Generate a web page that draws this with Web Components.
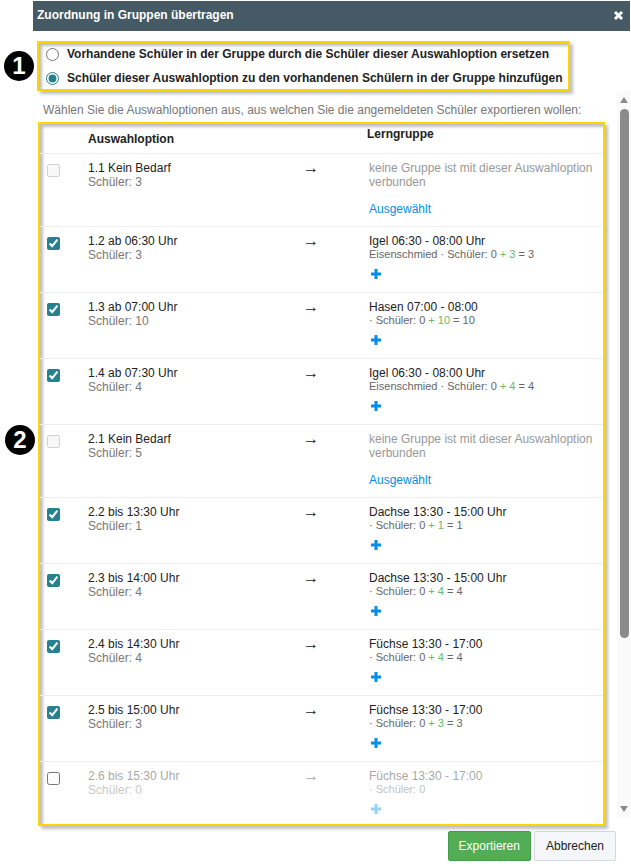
<!DOCTYPE html>
<html lang="de">
<head>
<meta charset="utf-8">
<meta name="viewport" content="width=device-width, initial-scale=1">
<title>Zuordnung in Gruppen übertragen</title>
<style>
	body {
		margin: 0;
		background: #fff;
		color: #222;
		font: 12px/14px "Liberation Sans", Arial, sans-serif;
	}
</style>
</head>
<body>
<transfer-dialog heading="Zuordnung in Gruppen übertragen">
	<callout-box slot="mode" number="1">
		<mode-choice></mode-choice>
	</callout-box>
	<scroll-pane>
		<span slot="intro">Wählen Sie die Auswahloptionen aus, aus welchen Sie die angemeldeten Schüler exportieren wollen:</span>
		<callout-box number="2" class="wide">
			<option-table></option-table>
		</callout-box>
	</scroll-pane>
	<action-button slot="actions" variant="primary">Exportieren</action-button>
	<action-button slot="actions">Abbrechen</action-button>
</transfer-dialog>

<script>
class TransferDialog extends HTMLElement {
	constructor() {
		super();
		this.attachShadow({ mode: 'open' });
		this.shadowRoot.innerHTML = `
			<style>
				:host {
					display: block;
					padding: 1px 0 6px 33px;
				}

				header {
					display: flex;
					align-items: center;
					justify-content: space-between;
					height: 30px;
					margin-right: 1px;
					padding: 0 6px 0 4px;
					box-sizing: border-box;
					background: #455a64;
					color: #fff;
				}

				h1 {
					margin: 0;
					padding-bottom: 2px;
					font-size: 12px;
				}

				.close {
					display: flex;
					padding: 0 0 2px;
					border: 0;
					background: none;
					color: inherit;
					cursor: pointer;
				}

				.mode {
					display: flex;
					padding: 10px 4px 0;
				}

				footer {
					display: flex;
					justify-content: flex-end;
					gap: 3px;
					padding: 5px 15px 0 0;
				}
			</style>
			<header>
				<h1></h1>
				<button class="close" type="button" aria-label="Schließen">
					<svg width="11" height="11" viewBox="0 0 11 11"><path d="M2 2l7 7M9 2l-7 7" stroke="currentColor" stroke-width="3"/></svg>
				</button>
			</header>
			<div class="mode"><slot name="mode"></slot></div>
			<slot></slot>
			<footer><slot name="actions"></slot></footer>
		`;
	}

	connectedCallback() {
		this.shadowRoot.querySelector('h1').textContent = this.getAttribute('heading');
	}
}

// Yellow frame with a numbered marker hanging over its left edge
class CalloutBox extends HTMLElement {
	constructor() {
		super();
		this.attachShadow({ mode: 'open' });
		this.shadowRoot.innerHTML = `
			<style>
				:host {
					display: block;
					position: relative;
					border: 2px solid #ffd400;
					box-shadow: 3px 3px 3px #00000040, inset 3px 3px 3px #00000040;
				}

				.marker {
					position: absolute;
					top: 8px;
					left: -35px;
					width: 30px;
					height: 30px;
					border-radius: 50%;
					background: #000;
					color: #fff;
					font: bold 24px/30px "Liberation Sans", Arial, sans-serif;
					text-align: center;
				}

				:host(.wide) .marker {
					top: 43%;
				}
			</style>
			<span class="marker"></span>
			<slot></slot>
		`;
	}

	connectedCallback() {
		this.shadowRoot.querySelector('.marker').textContent = this.getAttribute('number');
	}
}

class ModeChoice extends HTMLElement {
	constructor() {
		super();
		this.attachShadow({ mode: 'open' });
		this.shadowRoot.innerHTML = `
			<style>
				:host {
					display: flex;
					flex-direction: column;
					gap: 2px;
					padding: 0 5px 0 7px;
					font-weight: bold;
				}

				label {
					display: flex;
					align-items: center;
					gap: 8px;
					min-height: 22px;
				}

				input {
					width: 13px;
					height: 13px;
					margin: 0;
					accent-color: #25808f;
				}
			</style>
			<label><input type="radio" name="mode">Vorhandene Schüler in der Gruppe durch die Schüler dieser Auswahloption ersetzen</label>
			<label><input type="radio" name="mode" checked>Schüler dieser Auswahloption zu den vorhandenen Schülern in der Gruppe hinzufügen</label>
		`;
	}
}

class ScrollPane extends HTMLElement {
	constructor() {
		super();
		this.attachShadow({ mode: 'open' });
		this.shadowRoot.innerHTML = `
			<style>
				:host {
					display: flex;
					gap: 12px;
				}

				.content {
					flex: 1;
					min-width: 0;
					padding: 12px 0 0 5px;
				}

				.intro {
					margin: 0 0 5px;
					padding-left: 5px;
					color: #777;
				}

				.bar {
					display: flex;
					flex-direction: column;
					align-items: center;
					width: 14px;
					margin-bottom: 8px;
					padding: 6px 0;
					box-sizing: border-box;
					gap: 6px;
					background: #fafafa;
				}

				.thumb {
					width: 9px;
					height: 74%;
					border-radius: 5px;
					background: #8b8b8b;
				}

				.down {
					margin-top: auto;
				}
			</style>
			<div class="content">
				<p class="intro"><slot name="intro"></slot></p>
				<slot></slot>
			</div>
			<div class="bar" aria-hidden="true">
				<svg width="8" height="6" viewBox="0 0 8 6"><path d="M4 0l4 6H0z" fill="#8b8b8b"/></svg>
				<div class="thumb"></div>
				<svg class="down" width="8" height="6" viewBox="0 0 8 6"><path d="M0 0h8L4 6z" fill="#8b8b8b"/></svg>
			</div>
		`;
	}
}

class OptionTable extends HTMLElement {
	constructor() {
		super();
		this.attachShadow({ mode: 'open' });

		this.options = [
			{ name: '1.1 Kein Bedarf', count: 3 },
			{ name: '1.2 ab 06:30 Uhr', count: 3, group: 'Igel 06:30 - 08:00 Uhr', teacher: 'Eisenschmied' },
			{ name: '1.3 ab 07:00 Uhr', count: 10, group: 'Hasen 07:00 - 08:00' },
			{ name: '1.4 ab 07:30 Uhr', count: 4, group: 'Igel 06:30 - 08:00 Uhr', teacher: 'Eisenschmied' },
			{ name: '2.1 Kein Bedarf', count: 5 },
			{ name: '2.2 bis 13:30 Uhr', count: 1, group: 'Dachse 13:30 - 15:00 Uhr' },
			{ name: '2.3 bis 14:00 Uhr', count: 4, group: 'Dachse 13:30 - 15:00 Uhr' },
			{ name: '2.4 bis 14:30 Uhr', count: 4, group: 'Füchse 13:30 - 17:00' },
			{ name: '2.5 bis 15:00 Uhr', count: 3, group: 'Füchse 13:30 - 17:00' },
			{ name: '2.6 bis 15:30 Uhr', count: 0, group: 'Füchse 13:30 - 17:00' }
		];

		this.render();
	}

	groupCell(option) {
		if (!option.group) {
			return `
				<div class="none">keine Gruppe ist mit dieser Auswahloption verbunden</div>
				<a href="#">Ausgewählt</a>
			`;
		}
		const sum = option.count ? ` <span class="plus">+ ${option.count}</span> = ${option.count}` : '';
		return `
			<div>${option.group}</div>
			<div class="detail">${option.teacher ? option.teacher + ' ' : ''}· Schüler: 0${sum}</div>
			<button type="button" aria-label="Gruppe hinzufügen">
				<svg width="10" height="10" viewBox="0 0 10 10"><path d="M5 0v10M0 5h10" stroke="currentColor" stroke-width="3"/></svg>
			</button>
		`;
	}

	row(option, index) {
		const state = !option.group ? 'disabled' : option.count ? 'checked' : '';
		return `
			<tr class="${option.count ? '' : 'empty'}">
				<td class="check"><input type="checkbox" id="option-${index}" ${state}></td>
				<td><label for="option-${index}">${option.name}<span class="count">Schüler: ${option.count}</span></label></td>
				<td class="arrow"><span>→</span></td>
				<td class="group"><div>${this.groupCell(option)}</div></td>
			</tr>
		`;
	}

	render() {
		this.shadowRoot.innerHTML = `
			<style>
				:host {
					display: block;
				}

				table {
					width: 100%;
					table-layout: fixed;
					border-collapse: collapse;
				}

				.col-check { width: 48px; }
				.col-name { width: 215px; }
				.col-arrow { width: 64px; }

				th, td {
					padding: 7px 0 6px;
					border-bottom: 1px solid #eee;
					text-align: left;
					vertical-align: top;
				}

				th {
					height: 20px;
					padding: 8px 0 1px;
				}

				th.group {
					padding: 3px 0 6px;
				}

				tr:last-child td {
					padding-bottom: 3px;
					border-bottom: 0;
				}

				td.check {
					padding: 10px 0 0 7px;
				}

				td.group {
					padding-left: 2px;
				}

				input {
					display: block;
					width: 13px;
					height: 13px;
					margin: 0;
					accent-color: #25808f;
				}

				label, .count, .arrow span {
					display: block;
				}

				.arrow {
					font-size: 16px;
				}

				.count {
					color: #777;
				}

				.none {
					color: #999;
				}

				.detail {
					color: #666;
					font-size: 11px;
					line-height: 13px;
				}

				.plus {
					color: #66bb6a;
				}

				a {
					display: block;
					margin: 13px 0 4px;
					color: #038ee9;
					text-decoration: none;
				}

				button {
					display: flex;
					align-items: center;
					height: 25px;
					padding: 0 2px;
					border: 0;
					background: none;
					color: #038ee9;
					cursor: pointer;
				}

				.empty label, .empty .arrow span, .empty .group > div {
					opacity: .4;
				}
			</style>
			<table>
				<colgroup><col class="col-check"><col class="col-name"><col class="col-arrow"><col></colgroup>
				<thead>
					<tr><th></th><th>Auswahloption</th><th></th><th class="group">Lerngruppe</th></tr>
				</thead>
				<tbody>${this.options.map((option, index) => this.row(option, index)).join('')}</tbody>
			</table>
		`;
	}
}

class ActionButton extends HTMLElement {
	constructor() {
		super();
		this.attachShadow({ mode: 'open' });
		this.shadowRoot.innerHTML = `
			<style>
				:host {
					display: block;
				}

				button {
					height: 30px;
					padding: 0 11px;
					border: 1px solid #d6d9e0;
					border-radius: 2px;
					background: #f5f6fa;
					color: #222;
					font: inherit;
					cursor: pointer;
				}

				:host([variant="primary"]) button {
					padding: 0 10px;
					border-color: #449d48;
					background: #52ad56;
					color: #fff;
				}
			</style>
			<button type="button"><slot></slot></button>
		`;
	}
}

customElements.define('transfer-dialog', TransferDialog);
customElements.define('callout-box', CalloutBox);
customElements.define('mode-choice', ModeChoice);
customElements.define('scroll-pane', ScrollPane);
customElements.define('option-table', OptionTable);
customElements.define('action-button', ActionButton);
</script>
</body>
</html>
